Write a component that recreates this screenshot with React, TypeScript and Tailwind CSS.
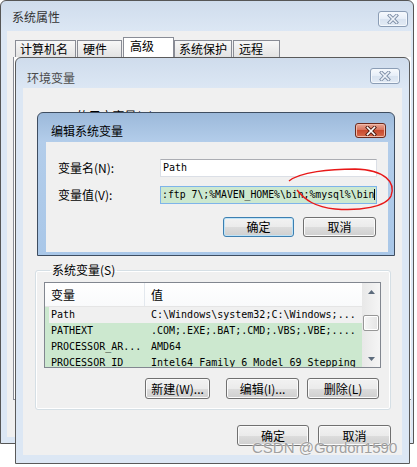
import React from "react";

const cjk = "font-['Noto_Sans_CJK_SC',sans-serif]";
const mono = "font-['DejaVu_Sans_Mono','Noto_Sans_CJK_SC',monospace]";

const CloseBtn = ({ active }: { active?: boolean }) => {
  return (
    <div
      className={
        active
          ? "flex h-[15px] w-[31px] items-center justify-center rounded-[3px] border border-[#6b2a1d] bg-[linear-gradient(#e7a999,#d66d55_50%,#c84a2f_50%,#d56a4c)] shadow-[inset_0_0_0_1px_#f0b9a8]"
          : "flex h-[16px] w-[30px] items-center justify-center rounded-[3px] border border-[#8b9db5] bg-[linear-gradient(#f7fafd,#e6eef8_50%,#d8e3f0_50%,#e3ebf5)] shadow-[inset_0_0_0_1px_#f4f8fc]"
      }
    >
      <svg width="12" height="10" viewBox="0 0 12 10">
        <path
          d="M2.5 1.5 L9.5 8.5 M9.5 1.5 L2.5 8.5"
          stroke={active ? "#4b1a10" : "#7d8ea6"}
          strokeWidth="3.4"
          strokeLinecap="square"
          fill="none"
        />
        <path
          d="M2.5 1.5 L9.5 8.5 M9.5 1.5 L2.5 8.5"
          stroke={active ? "#ffffff" : "#eef3f9"}
          strokeWidth="1.6"
          strokeLinecap="square"
          fill="none"
        />
      </svg>
    </div>
  );
};

const Btn = ({
  children,
  className,
  focus,
}: {
  children: React.ReactNode;
  className: string;
  focus?: boolean;
}) => {
  return (
    <div
      className={
        (focus
          ? "border-[#3c7fb1] shadow-[inset_0_0_0_1px_#bfe3f7] "
          : "border-[#707070] shadow-[inset_0_0_0_1px_#fbfbfb] ") +
        "flex items-center justify-center rounded-[3px] border bg-[linear-gradient(#f2f2f2,#ebebeb_50%,#dddddd_50%,#cfcfcf)] text-[12px] leading-none text-black " +
        className
      }
    >
      {children}
    </div>
  );
};

const rows = [
  ["Path", "C:\\Windows\\system32;C:\\Windows;..."],
  ["PATHEXT", ".COM;.EXE;.BAT;.CMD;.VBS;.VBE;...."],
  ["PROCESSOR_AR...", "AMD64"],
  ["PROCESSOR_ID", "Intel64 Family 6 Model 69 Stepping 1"],
];

export default function App() {
  return (
    <div className={`relative h-[467px] w-[417px] overflow-hidden bg-white ${cjk}`}>
      {/* 系统属性 */}
      <div className="absolute left-0 top-0 h-[444px] w-[414px] rounded-t-[6px] border border-[#565656] bg-[linear-gradient(#cfdcec,#dce7f4_30px,#dce7f4)]">
        <div className="flex h-[30px] items-start justify-between pl-[11px] pr-[5px]">
          <span className="pt-[8px] text-[12px] leading-[16px] text-[#333]">系统属性</span>
          <div className="pt-[10px]">
            <CloseBtn />
          </div>
        </div>
        <div className="ml-[6px] mr-[2px] h-[406px] bg-[#f0f0f0]">
          <div className="flex h-[26px] items-end pl-[8px] text-[12px] text-black">
            <div className="h-[17px] w-[61px] border border-b-0 border-[#898c95] bg-[linear-gradient(#f7f7f7,#e3e3e3)] pl-[4px] leading-[16px]">
              计算机名
            </div>
            <div className="ml-[1px] h-[17px] w-[45px] border border-b-0 border-[#898c95] bg-[linear-gradient(#f7f7f7,#e3e3e3)] pl-[5px] leading-[16px]">
              硬件
            </div>
            <div className="ml-[1px] h-[20px] w-[51px] border border-b-0 border-[#898c95] bg-white pl-[6px] leading-[16px]">
              高级
            </div>
            <div className="h-[17px] w-[58px] border border-b-0 border-[#898c95] bg-[linear-gradient(#f7f7f7,#e3e3e3)] pl-[4px] leading-[16px]">
              系统保护
            </div>
            <div className="ml-[1px] h-[17px] w-[47px] border border-b-0 border-[#898c95] bg-[linear-gradient(#f7f7f7,#e3e3e3)] pl-[5px] leading-[16px]">
              远程
            </div>
          </div>
          <div className="ml-[6px] h-[343px] border-b border-l border-[#898c95] bg-white" />
        </div>
      </div>

      {/* 环境变量 */}
      <div className="absolute left-[15px] top-[57px] h-[407px] w-[395px] rounded-t-[6px] border border-[#5a5a5a] bg-[linear-gradient(#cfdcec,#dce7f4_30px,#dce7f4)]">
        <div className="flex h-[30px] items-start justify-between pl-[11px] pr-[9px]">
          <span className="pt-[12px] text-[12px] leading-[16px] text-[#4a4a4a]">环境变量</span>
          <div className="pt-[10px]">
            <CloseBtn />
          </div>
        </div>
        <div className="ml-[7px] mr-[7px] h-[367px] bg-[#f0f0f0] text-[12px] text-black">
          <div className="pl-[20px] pt-[20px] leading-[16px]">user1 的用户变量(U)</div>

          <fieldset className="ml-[12px] mt-[138px] w-[356px] rounded-[3px] border border-[#d5dfe5] pb-[10px] pl-[8px] pt-[4px] shadow-[inset_0_0_0_1px_#ffffff]">
            <legend className="ml-[6px] px-[2px] leading-[16px]">系统变量(S)</legend>
            <div className="flex h-[86px] w-[337px] border border-[#828790] bg-[#cce8cf]">
              <div className="min-w-0 flex-1 overflow-hidden">
                <div className="flex h-[24px] items-center border-b border-[#e5e5e5] bg-[linear-gradient(#ffffff,#f9fafb)]">
                  <div className="h-full w-[100px] shrink-0 border-r border-[#e3e8ee] pl-[6px] leading-[24px]">变量</div>
                  <div className="pl-[6px]">值</div>
                </div>
                {rows.map((r, i) => (
                  <div
                    key={r[0]}
                    className={
                      (i === 0 ? "ml-[4px] bg-[#f0f0f0] pl-[2px] " : "pl-[6px] ") +
                      `flex h-[16px] whitespace-nowrap text-[10px] leading-[16px] ${mono}`
                    }
                  >
                    <div className="w-[100px] shrink-0">{r[0]}</div>
                    <div className="shrink-0">{r[1]}</div>
                  </div>
                ))}
              </div>
              <div className="flex w-[18px] shrink-0 flex-col bg-[linear-gradient(90deg,#e8e8e8,#f5f5f5)]">
                <div className="flex h-[17px] items-center justify-center">
                  <svg width="7" height="4" viewBox="0 0 7 4">
                    <path d="M0 4 L3.5 0 L7 4 Z" fill="#5c6b7c" />
                  </svg>
                </div>
                <div className="ml-[1px] mt-[15px] h-[16px] w-[16px] rounded-[2px] border border-[#979797] bg-[linear-gradient(90deg,#f6f6f6,#e4e4e4)] shadow-[inset_0_0_0_1px_#ffffff]" />
                <div className="flex-1" />
                <div className="flex h-[17px] items-center justify-center">
                  <svg width="7" height="4" viewBox="0 0 7 4">
                    <path d="M0 0 L3.5 4 L7 0 Z" fill="#5c6b7c" />
                  </svg>
                </div>
              </div>
            </div>
            <div className="mt-[10px] flex">
              <Btn className="ml-[101px] h-[21px] w-[65px]">新建(W)...</Btn>
              <Btn className="ml-[16px] h-[21px] w-[73px]">编辑(I)...</Btn>
              <Btn className="ml-[8px] h-[21px] w-[72px]">删除(L)</Btn>
            </div>
          </fieldset>

          <div className="mt-[15px] flex justify-end gap-[9px] pr-[11px]">
            <Btn className="h-[21px] w-[72px]">确定</Btn>
            <Btn className="h-[21px] w-[73px]">取消</Btn>
          </div>
        </div>
      </div>

      {/* 编辑系统变量 */}
      <div className="absolute left-[37px] top-[112px] h-[144px] w-[358px] rounded-t-[6px] border border-[#3e4d60] bg-[linear-gradient(#9cb9da,#b3cdea_29px,#a9c7e8)]">
        <div className="flex h-[29px] items-start justify-between pl-[13px] pr-[8px]">
          <span className="pt-[10px] text-[12px] leading-[16px] text-black">编辑系统变量</span>
          <div className="pt-[10px]">
            <CloseBtn active />
          </div>
        </div>
        <div className="ml-[8px] mr-[6px] h-[110px] bg-[#f0f0f0] text-[12px] text-black">
          <div className="flex items-center pt-[17px]">
            <div className="w-[114px] pl-[12px] leading-[18px]">变量名(N):</div>
            <div className={`h-[18px] w-[217px] border border-[#dbdfe6] border-t-[#abadb3] bg-white pl-[2px] text-[10px] leading-[16px] ${mono}`}>
              Path
            </div>
          </div>
          <div className="mt-[9px] flex items-center">
            <div className="w-[114px] pl-[12px] leading-[18px]">变量值(V):</div>
            <div className={`h-[18px] w-[217px] overflow-hidden whitespace-nowrap border border-[#7eb4ea] bg-[#cce8cf] pl-[1px] text-[9.8px] leading-[16px] ${mono}`}>
              <span className="border-r border-black">:ftp 7\;%MAVEN_HOME%\bin;%mysql%\bin</span>
            </div>
          </div>
          <div className="mt-[13px] flex justify-end gap-[9px] pr-[12px]">
            <Btn focus className="h-[20px] w-[71px]">确定</Btn>
            <Btn className="h-[20px] w-[73px]">取消</Btn>
          </div>
        </div>
      </div>

      <svg className="pointer-events-none absolute left-0 top-0" width="417" height="467">
        <path
          d="M289 181 C300 172, 330 169, 355 169 C385 170, 396 182, 391 196 C386 207, 360 211, 335 209 C315 207, 305 200, 297 190"
          stroke="#e81818"
          strokeWidth="1.4"
          fill="none"
        />
      </svg>

      <div className="pointer-events-none absolute left-[252px] top-[439px] font-['Liberation_Sans',sans-serif] text-[15px] leading-[18px] text-[#a0a0a0] [text-shadow:0_0_2px_#ffffff]">
        CSDN @Gordon1590
      </div>
    </div>
  );
}
